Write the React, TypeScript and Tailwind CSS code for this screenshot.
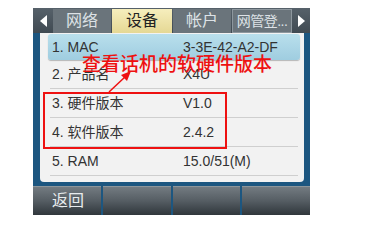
import React from "react";

const rows = [
  { k: "1. MAC", v: "3-3E-42-A2-DF" },
  { k: "2. 产品名", v: "X4U" },
  { k: "3. 硬件版本", v: "V1.0" },
  { k: "4. 软件版本", v: "2.4.2" },
  { k: "5. RAM", v: "15.0/51(M)" },
];

const tabs = ["网络", "设备", "帐户", "网管登..."];

export default function App() {
  return (
    <div
      className="relative h-[225px] w-[366px] overflow-hidden bg-white pl-[33px] pt-[8px]"
      style={{ fontFamily: '"Liberation Sans", "Noto Sans CJK SC", sans-serif' }}
    >
      <div className="flex h-[207px] w-[277px] flex-col bg-[#1c5680]">
        {/* tab bar */}
        <div className="flex h-[25px] items-stretch bg-gradient-to-b from-[#56616a] to-[#404a52]">
          <div className="flex w-[20px] items-center justify-center">
            <div className="h-0 w-0 border-y-[6px] border-r-[7px] border-y-transparent border-r-white" />
          </div>
          <div className="flex flex-1 gap-[1px] pt-[1px]">
            {tabs.map((t, i) => (
              <div
                key={t}
                className={
                  i === 1
                    ? "flex w-[60px] items-center justify-center whitespace-nowrap bg-gradient-to-b from-[#f6eebd] to-[#e5d894] text-[16px] text-[#222]"
                    : i === 3
                    ? "flex w-[60px] items-center justify-center overflow-hidden whitespace-nowrap border border-[#8d979e] bg-[#6a747b] text-[14px] tracking-[-0.5px] text-[#dde2e6]"
                    : "flex w-[58px] items-center justify-center whitespace-nowrap bg-[#6a747b] text-[16px] text-[#dde2e6]"
                }
              >
                {t}
              </div>
            ))}
          </div>
          <div className="flex w-[17px] items-center justify-center">
            <div className="h-0 w-0 border-y-[6px] border-l-[7px] border-y-transparent border-l-white" />
          </div>
        </div>

        {/* list */}
        <div className="h-[149px] pl-[7px] pr-[6px]">
          <div className="h-full rounded-b-[4px] bg-[#f2f2f2] pl-[8px] pr-[4px] pt-[1px] text-[14px] text-[#333]">
            {rows.map((r, i) => (
              <div
                key={r.k}
                className={
                  i === 0
                    ? "flex h-[26px] items-center rounded-[3px] bg-gradient-to-b from-[#b9dfec] to-[#9fcde0] pl-[4px] shadow-[0_1px_1px_rgba(0,0,0,0.25)]"
                    : "mx-[2px] flex h-[29px] items-center border-b border-[#cfcfcf] pl-[2px]"
                }
              >
                <span className="w-[131px]">{r.k}</span>
                <span>{r.v}</span>
              </div>
            ))}
          </div>
        </div>

        {/* softkeys */}
        <div className="mt-[4px] flex flex-1 gap-[2px]">
          {["返回", "", "", ""].map((s, i) => (
            <div
              key={i}
              className="flex flex-1 items-center border-t border-[#8c959b] bg-gradient-to-b from-[#737b81] via-[#555d63] to-[#30373c] pl-[19px] text-[16px] text-[#e8ecee]"
            >
              {s}
            </div>
          ))}
        </div>
      </div>

      {/* annotation */}
      <div
        className="absolute left-[82px] top-[53px] whitespace-nowrap text-[19px] font-medium leading-[20px] text-[#ee1111]"
        style={{ fontFamily: '"Noto Sans CJK SC", sans-serif' }}
      >
        查看话机的软硬件版本
      </div>
      <svg className="absolute left-0 top-0" width="366" height="225">
        <line x1="109" y1="92" x2="126" y2="76" stroke="#ee1111" strokeWidth="1.5" />
        <polygon points="131,71 121,75 127,81" fill="#ee1111" />
      </svg>
      <div className="absolute left-[43px] top-[92px] h-[57px] w-[184px] border-2 border-[#ee1111]" />
    </div>
  );
}
